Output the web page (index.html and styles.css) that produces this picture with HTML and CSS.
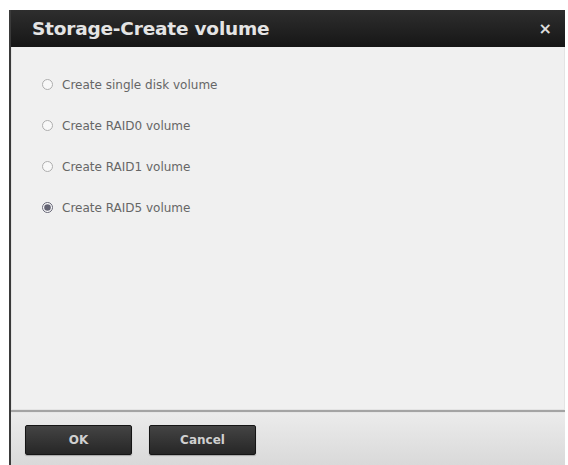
FILE: index.html
```html
<!DOCTYPE html>
<html lang="en">
<head>
  <meta charset="UTF-8" />
  <title>Storage-Create volume</title>
  <link rel="stylesheet" href="styles.css">
</head>
<body>
  <div class="dialog">
    <div class="dialog-header">
      <span class="dialog-title">Storage-Create volume</span>
      <span class="dialog-close">&times;</span>
    </div>

    <div class="dialog-body">
      <label class="option">
        <input type="radio" name="volume" />
        <span>Create single disk volume</span>
      </label>
      <label class="option">
        <input type="radio" name="volume" />
        <span>Create RAID0 volume</span>
      </label>
      <label class="option">
        <input type="radio" name="volume" />
        <span>Create RAID1 volume</span>
      </label>
      <label class="option">
        <input type="radio" name="volume" checked />
        <span>Create RAID5 volume</span>
      </label>
    </div>

    <div class="dialog-footer">
      <button class="btn">OK</button>
      <button class="btn">Cancel</button>
    </div>
  </div>
</body>
</html>
```

FILE: styles.css
```css
body {
  margin: 0;
  background: #fff;
  font-family: "DejaVu Sans", Verdana, sans-serif;
}

/* dialog frame */
.dialog {
  margin: 10px 3px 0 9px;
  height: 455px;
  display: flex;
  flex-direction: column;
  border-left: 2px solid #3a3a3a;
  box-sizing: border-box;
}

.dialog-header {
  height: 37px;
  display: flex;
  align-items: center;
  justify-content: space-between;
  padding: 0 13px 0 21px;
  background: linear-gradient(#2e2e2e, #161616);
  color: #e4e4e4;
  flex-shrink: 0;
}

.dialog-title {
  font-size: 18.5px;
  font-weight: bold;
  letter-spacing: -0.2px;
}

.dialog-close {
  font-size: 16px;
  font-weight: bold;
  color: #ddd;
}

/* radio list */
.dialog-body {
  flex: 1;
  background: #f0f0f0;
  border: 1px solid #e4e4e4;
  border-top: none;
  padding: 17px 0 0 30px;
  display: flex;
  flex-direction: column;
}

.option {
  height: 41px;
  display: flex;
  align-items: center;
  gap: 9px;
  font-size: 12px;
  color: #666;
}

.option input {
  margin: 0;
  width: 11px;
  height: 11px;
  accent-color: #556;
  opacity: 0.55;
}

.option input:checked {
  opacity: 0.9;
}

/* footer */
.dialog-footer {
  height: 55px;
  flex-shrink: 0;
  border-top: 2px solid #a4a4a4;
  box-shadow: inset 0 1px 0 #e6e6e6;
  background: linear-gradient(#ececec, #d9d9d9);
  display: flex;
  align-items: flex-start;
  gap: 17px;
  padding: 13px 0 0 14px;
  box-sizing: border-box;
}

.btn {
  width: 107px;
  height: 30px;
  border: 1px solid #151515;
  border-radius: 2px;
  background: linear-gradient(#444, #262626);
  color: #d0d0d0;
  font-family: "DejaVu Sans", Verdana, sans-serif;
  font-size: 12px;
  font-weight: bold;
  box-shadow: 0 1px 1px rgba(0, 0, 0, 0.25);
}
```
